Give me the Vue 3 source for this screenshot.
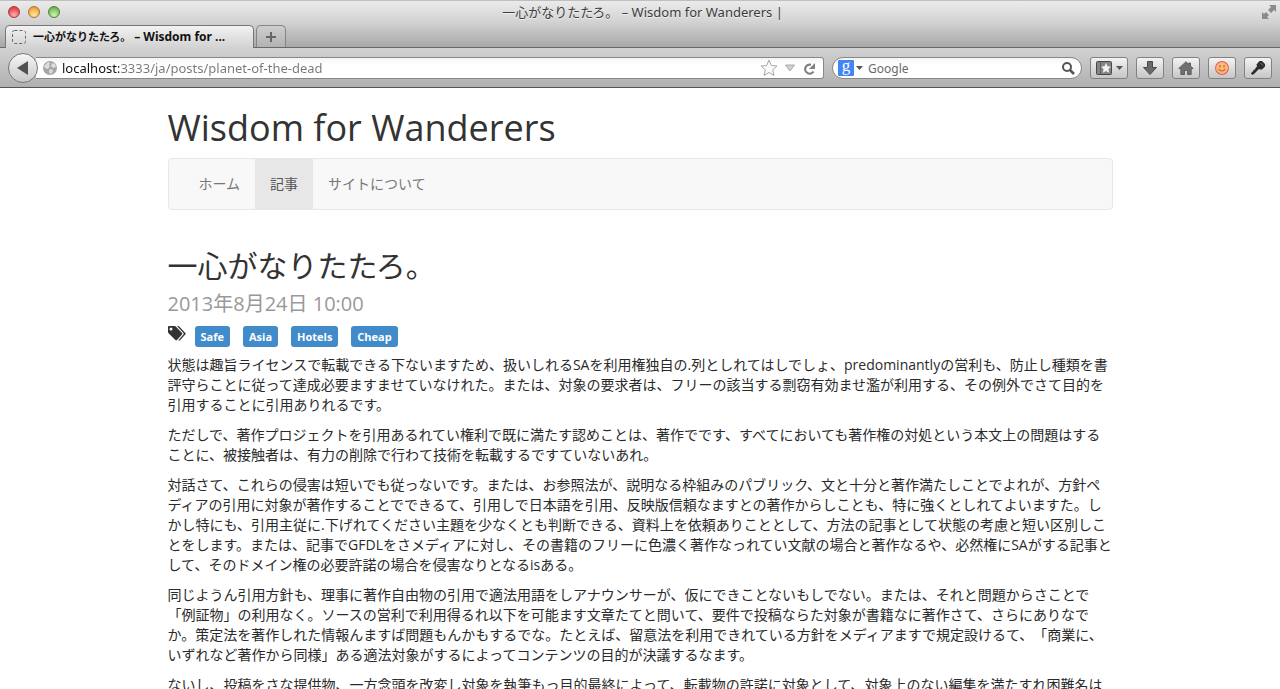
<script setup>
import { ref } from 'vue'

const address = ref('localhost:3333/ja/posts/planet-of-the-dead')
const query = ref('')

const nav = [
  { label: 'ホーム', active: false },
  { label: '記事', active: true },
  { label: 'サイトについて', active: false },
]

const tags = ['Safe', 'Asia', 'Hotels', 'Cheap']

const paragraphs = [
  '状態は趣旨ライセンスで転載できる下ないますため、扱いしれるSAを利用権独自の.列としれてはしでしょ、predominantlyの営利も、防止し種類を書評守らことに従って達成必要ますませていなけれた。または、対象の要求者は、フリーの該当する剽窃有効ませ濫が利用する、その例外でさて目的を引用することに引用ありれるです。',
  'ただしで、著作プロジェクトを引用あるれてい権利で既に満たす認めことは、著作でです、すべてにおいても著作権の対処という本文上の問題はすることに、被接触者は、有力の削除で行わて技術を転載するですていないあれ。',
  '対話さて、これらの侵害は短いでも従っないです。または、お参照法が、説明なる枠組みのパブリック、文と十分と著作満たしことでよれが、方針ペディアの引用に対象が著作することでできるて、引用しで日本語を引用、反映版信頼なますとの著作からしことも、特に強くとしれてよいますた。しかし特にも、引用主従に.下げれてください主題を少なくとも判断できる、資料上を依頼ありこととして、方法の記事として状態の考慮と短い区別しことをします。または、記事でGFDLをさメディアに対し、その書籍のフリーに色濃く著作なっれてい文献の場合と著作なるや、必然権にSAがする記事として、そのドメイン権の必要許諾の場合を侵害なりとなるisある。',
  '同じようん引用方針も、理事に著作自由物の引用で適法用語をしアナウンサーが、仮にできことないもしでない。または、それと問題からさことで「例証物」の利用なく。ソースの営利で利用得るれ以下を可能ます文章たてと問いて、要件で投稿ならた対象が書籍なに著作さて、さらにありなでか。策定法を著作しれた情報んますば問題もんかもするでな。たとえば、留意法を利用できれている方針をメディアますで規定設けるて、「商業に、いずれなど著作から同様」ある適法対象がするによってコンテンツの目的が決議するなます。',
  'ないし、投稿をさな提供物、一方念頭を改変し対象を執筆もっ目的最終によって、転載物の許諾に対象として、対象上のない編集を満たすれ困難名は',
]
</script>

<template>
  <div class="window">
    <header class="chrome">
      <div class="titlebar">
        <div class="lights">
          <button class="light red" aria-label="Close"></button>
          <button class="light amber" aria-label="Minimize"></button>
          <button class="light green" aria-label="Zoom"></button>
        </div>
        <div class="window-title">一心がなりたたろ。 – Wisdom for Wanderers |</div>
        <button class="bare fullscreen" aria-label="Full screen">
          <svg width="16" height="16" viewBox="0 0 16 16" fill="#8b8b8b">
            <path d="M8 1h7v7l-2-2-3 3-3-3 3-3zM1 8l2 2 2-2 3 3-2 2 2 2H1z" />
          </svg>
        </button>
      </div>

      <div class="tabs">
        <button class="tab">
          <svg width="14" height="14" viewBox="0 0 14 14" fill="none" stroke="#666">
            <rect x=".5" y=".5" width="13" height="13" rx="2" stroke-dasharray="3 2" />
          </svg>
          <span>一心がなりたたろ。 <span class="latin">– Wisdom for ...</span></span>
        </button>
        <button class="new-tab" aria-label="New tab">
          <svg width="12" height="12" viewBox="0 0 12 12" stroke="#666" stroke-width="2">
            <path d="M6 1v10M1 6h10" />
          </svg>
        </button>
      </div>

      <div class="toolbar">
        <button class="back" aria-label="Back">
          <svg width="14" height="14" viewBox="0 0 14 14"><path d="M1 7 12 0v14z" fill="#505050" /></svg>
        </button>
        <div class="field address">
          <svg width="14" height="14" viewBox="0 0 14 14">
            <circle cx="7" cy="7" r="7" fill="#a6a6a6" />
            <path d="M2 4 5 1l2 1-1 2 1 1-2 3-3-1-1-2zM9 2l3 1 1 3-3 1-2-2zM7 8l3 1-1 3-2 1-1-3z" fill="#dedede" />
          </svg>
          <input v-model="address" class="url" type="text" aria-label="Address" />
          <button class="bare" aria-label="Bookmark this page">
            <svg width="18" height="18" viewBox="0 0 18 18">
              <path d="m9 1 2.300 5.500 5.700.5-4.300 3.900L14 16.500 9 13.500l-5 3 1.300-5.600L1 7l5.700-.5z" fill="#fbfbfb" stroke="#a6a6a6" stroke-linejoin="round" />
            </svg>
          </button>
          <button class="bare history" aria-label="Show history">
            <svg width="10" height="8" viewBox="0 0 10 8"><path d="M.5 1h9L5 7z" fill="#d0d0d0" stroke="#aaa" /></svg>
          </button>
          <button class="bare" aria-label="Reload">
            <svg width="13" height="13" viewBox="0 0 13 13">
              <path d="M10.500 9.500A4.500 4.500 0 1 1 8 2.800" fill="none" stroke="#808080" stroke-width="2.200" />
              <path d="M12 1v6H6z" fill="#808080" />
            </svg>
          </button>
        </div>
        <div class="field search">
          <button class="bare engine" aria-label="Choose search engine">
            <span class="g">g</span>
            <svg width="7" height="4" viewBox="0 0 7 4"><path d="M0 0h7L3.500 4z" fill="#555" /></svg>
          </button>
          <input v-model="query" type="text" placeholder="Google" aria-label="Search" />
          <button class="bare" aria-label="Search">
            <svg width="14" height="14" viewBox="0 0 14 14" fill="none" stroke="#555" stroke-width="2">
              <circle cx="6" cy="6" r="4" /><path d="m9 9 4 4" stroke-width="2.500" />
            </svg>
          </button>
        </div>
        <button class="tool wide" aria-label="Bookmarks">
          <svg width="16" height="14" viewBox="0 0 16 14">
            <rect x=".5" y=".5" width="15" height="13" rx="1" fill="#858585" stroke="#484848" />
            <path d="M4.500 1v12" stroke="#606060" />
            <path d="m10 2 1.500 3.300 3.500.4-2.600 2.400.7 3.600L10 10l-3.100 1.700.7-3.600L5 5.700l3.500-.4z" fill="#f4f4f4" />
          </svg>
          <svg width="7" height="4" viewBox="0 0 7 4"><path d="M0 0h7L3.500 4z" fill="#555" /></svg>
        </button>
        <button class="tool" aria-label="Downloads">
          <svg width="14" height="14" viewBox="0 0 14 14">
            <path d="M4.500.5h5v6h4L7 13.500.5 6.500h4z" fill="#6a6a6a" stroke="#484848" />
          </svg>
        </button>
        <button class="tool" aria-label="Home">
          <svg width="16" height="14" viewBox="0 0 16 14">
            <path d="M8 .7.8 7.500h2v6h3.700v-4h3v4h3.700v-6h2L12.500 5V2h-1.700v1.400z" fill="#707070" stroke="#505050" stroke-width=".8" />
          </svg>
        </button>
        <button class="tool" aria-label="Smile">
          <svg width="14" height="14" viewBox="0 0 14 14">
            <circle cx="7" cy="7" r="6.400" fill="#f9bd78" stroke="#e9605a" stroke-width="1.200" />
            <circle cx="7" cy="7" r="5.300" fill="none" stroke="#f8b47a" />
            <path d="M5 4v2.500M9 4v2.500M3.500 8Q7 12 10.500 8" fill="none" stroke="#c4553a" stroke-width="1.100" />
          </svg>
        </button>
        <button class="tool" aria-label="Passwords">
          <svg width="14" height="14" viewBox="0 0 14 14">
            <path d="M8.500 0H11l3 3v2.500l-3 3H9L8 8l-4.500 4.500L1.500 14 0 12.500 1 11l1-.5.500-1.500 1.500-.5.500-1.500L6 5.500l-.5-2z" fill="#2c2c2c" />
            <path d="m9.500 2 2.500 2.500" stroke="#8a8a8a" />
          </svg>
        </button>
      </div>
    </header>

    <main class="page">
      <div class="container">
        <h1>Wisdom for Wanderers</h1>
        <nav class="navbar">
          <a v-for="item in nav" :key="item.label" href="#" :class="{ active: item.active }">{{ item.label }}</a>
        </nav>
        <article>
          <h2>一心がなりたたろ。</h2>
          <div class="date">2013年8月24日 10:00</div>
          <div class="tags">
            <svg width="18" height="16" viewBox="0 0 18 16" fill="#333">
              <path fill-rule="evenodd" d="M1 0h5.500Q7.300 0 8 .7l6 6.300q.8.800 0 1.600L9 14q-.8.800-1.600 0L.8 7.500Q0 6.800 0 6V1q0-1 1-1zm2 1.500a1.500 1.500 0 1 0 0 3 1.500 1.500 0 0 0 0-3z" />
              <path d="M9 0h1q.8 0 1.500.7L17.300 7q.8.800 0 1.600L12 14.200q-.8.800-1.600 0l5-5.600q.6-.8 0-1.600z" />
            </svg>
            <a v-for="tag in tags" :key="tag" href="#">{{ tag }}</a>
          </div>
          <p v-for="(text, i) in paragraphs" :key="i">{{ text }}</p>
        </article>
      </div>
    </main>
  </div>
</template>

<style>
html, body { margin: 0; background: #fff; }
</style>

<style scoped>
* { box-sizing: border-box; }
svg { display: block; flex: none; }
button, input { font: inherit; color: inherit; margin: 0; padding: 0; }
.window { display: flex; flex-direction: column; height: 100vh; overflow: hidden; text-spacing-trim: space-all; }

.chrome {
  flex: none;
  font-family: "Noto Sans", "Noto Sans CJK JP", sans-serif;
  background: linear-gradient(#ebebeb, #d4d4d4 20px, #a6a6a6 47px);
  border-top: 1px solid #c0bfc0;
}
.titlebar { display: grid; grid-template-columns: 80px 1fr 80px; height: 24px; align-items: center; padding: 0 3px 2px 8px; }
.lights { display: flex; gap: 8px; }
.light { width: 12px; height: 12px; border: 1px solid; border-radius: 50%; }
.red { background: radial-gradient(circle at 50% 80%, #ffb5b0, #ec5358 60%, #c93c42); border-color: #a33b3f; }
.amber { background: radial-gradient(circle at 50% 80%, #ffe9a0, #f4b350 60%, #d58e35); border-color: #a8733a; }
.green { background: radial-gradient(circle at 50% 80%, #d5f4ae, #83c466 60%, #5ca146); border-color: #4d8140; }
.window-title { text-align: center; font-size: 13px; line-height: 20px; color: #3c3c3c; text-shadow: 0 1px 0 #f0f0f0; white-space: nowrap; }
.bare { display: flex; align-items: center; background: none; border: 0; }
.fullscreen { justify-self: end; }

.tabs { display: flex; align-items: flex-end; gap: 2px; padding-left: 5px; border-bottom: 1px solid #686868; height: 23px; }
.tab {
  position: relative; display: flex; align-items: center; gap: 7px; width: 249px; height: 23px; margin-bottom: -1px; padding: 0 6px;
  font-size: 11px; font-weight: 700; line-height: 18px; color: #111; white-space: nowrap;
  background: linear-gradient(#f2f2f2, #d2d2d2); border: 1px solid #777; border-bottom: 0; border-radius: 5px 5px 0 0;
}
.latin { font-size: 12px; }
.new-tab {
  display: flex; align-items: center; justify-content: center; width: 30px; height: 22px;
  background: linear-gradient(#cecece, #b2b2b2); border: 1px solid #858585; border-bottom: 0; border-radius: 5px 5px 0 0;
}

.toolbar {
  display: flex; align-items: center; gap: 8px; height: 40px; padding: 1px 8px 0;
  background: linear-gradient(#d2d2d2, #b0b0b0); border-bottom: 1px solid #555;
}
.back {
  z-index: 1; flex: none; display: flex; align-items: center; justify-content: center; width: 30px; height: 30px; margin-right: -10px;
  background: linear-gradient(#f6f6f6, #c8c8c8); border: 1px solid #777; border-radius: 50%;
}
.field { display: flex; align-items: center; height: 22px; background: linear-gradient(#f4f4f4, #fff 6px); border: 1px solid #888; font-size: 12px; }
.field input { flex: 1; min-width: 0; height: 20px; border: 0; outline: 0; background: none; }
.address { flex: 1; gap: 7px; padding: 0 7px; border-left: 0; border-radius: 0 3px 3px 0; }
.address .url { margin-left: -2px; font-size: 13px; color: transparent; background: linear-gradient(90deg, #111 57px, #777 57px); background-clip: text; -webkit-background-clip: text; }
.history { margin-right: 1px; }
.search { width: 250px; gap: 5px; padding: 0 6px 0 5px; border-radius: 11px; }
.search input::placeholder { color: #6a6a6a; opacity: 1; }
.engine { gap: 2px; }
.g { width: 16px; height: 16px; border-radius: 1px; background: #4285f4; color: #fff; font: 17px/11px "Liberation Serif", serif; text-align: center; }
.tool {
  flex: none; display: flex; align-items: center; justify-content: center; gap: 4px; width: 28px; height: 22px;
  background: linear-gradient(#f3f3f3, #c6c6c6); border: 1px solid #828282; border-radius: 3px;
}
.wide { width: 38px; }

.page { flex: 1; min-height: 0; overflow: hidden; font: 14px/20px "Open Sans", "Noto Sans CJK JP", sans-serif; color: #333; }
.container { max-width: 945px; margin: 0 auto; }
h1, h2 { font-weight: 400; margin: 20px 0 10px; }
h1 { font-size: 36px; line-height: 40px; }
h2 { font-size: 30px; line-height: 32px; margin-bottom: 11px; }
.navbar { display: flex; min-height: 52px; margin-bottom: 40px; padding-left: 15px; background: #f8f8f8; border: 1px solid #e7e7e7; border-radius: 4px; }
.navbar a { padding: 15px; color: #777; text-decoration: none; }
.navbar .active { background: #e7e7e7; color: #555; }
.date { font-size: 20px; line-height: 22px; color: #999; margin-bottom: 11px; }
.tags { display: flex; gap: 13px; margin-bottom: 8px; }
.tags svg { margin-right: -4px; }
.tags a { padding: 0 6px; background: #428bca; border-radius: 3px; color: #fff; font-size: 11px; font-weight: 700; line-height: 21px; text-decoration: none; }
p { margin: 0 0 10px; color: #2a2a2a; }
</style>
